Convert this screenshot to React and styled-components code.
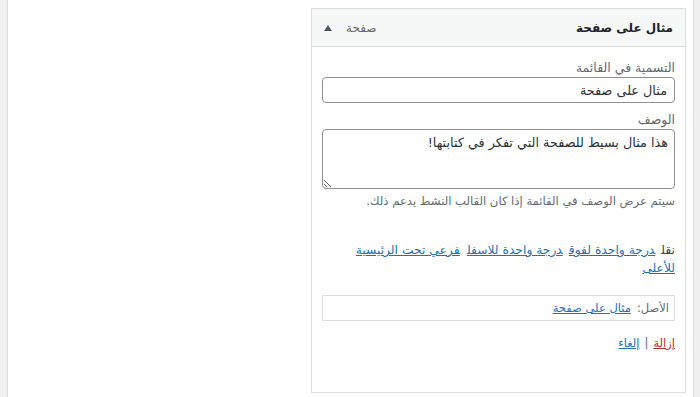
import React from 'react';
import styled, { createGlobalStyle } from 'styled-components';

const Global = createGlobalStyle`
  html, body { margin: 0; padding: 0; background: #f0f0f1; }
  body { font-family: "DejaVu Sans", sans-serif; font-size: 13px; color: #3c434a; }
  * { box-sizing: border-box; }
`;

const Page = styled.div`
  direction: rtl;
  margin-left: 7px;
  width: 687px;
  height: 397px;
  background: #fff;
  border-left: 1px solid #dcdcde;
  border-right: 1px solid #dcdcde;
  padding: 8px 7px 0 0;
  display: flex;
  align-items: flex-start;
`;

const Panel = styled.div`
  width: 375px;
  height: 385px;
  border: 1px solid #dcdcde;
  display: flex;
  flex-direction: column;
`;

const Header = styled.div`
  height: 38px;
  background: #f6f7f7;
  border-bottom: 1px solid #dcdcde;
  padding: 0 12px 0 12px;
  display: flex;
  align-items: center;
  justify-content: space-between;
`;

const Title = styled.span`
  font-size: 12px;
  font-weight: bold;
  color: #1d2327;
`;

const Controls = styled.span`
  display: flex;
  align-items: center;
  gap: 14px;
`;

const ItemType = styled.span`
  font-size: 12px;
  color: #646970;
`;

const Toggle = styled.span`
  width: 0;
  height: 0;
  border-left: 4px solid transparent;
  border-right: 4px solid transparent;
  border-bottom: 6px solid #50575e;
`;

const Settings = styled.div`
  padding: 12px 10px 10px 10px;
  display: flex;
  flex-direction: column;
`;

const Field = styled.label`
  display: flex;
  flex-direction: column;
  color: #646970;
  font-size: 12.5px;
  line-height: 18px;
  margin-bottom: ${p => p.$mb || 0}px;
`;

const TextInput = styled.input`
  direction: rtl;
  height: 26px;
  width: 100%;
  border: 1px solid #8c8f94;
  border-radius: 4px;
  padding: 0 7px;
  font-family: inherit;
  font-size: 12.8px;
  color: #2c3338;
  outline: none;
`;

const TextArea = styled.textarea`
  direction: rtl;
  height: 60px;
  width: 100%;
  border: 1px solid #8c8f94;
  border-radius: 4px;
  padding: 4px 6px;
  font-family: inherit;
  font-size: 12.8px;
  line-height: 18px;
  color: #2c3338;
  outline: none;
  resize: both;
  margin: 0;
  display: block;
`;

const Help = styled.span`
  margin-top: 3px;
  color: #646970;
  font-size: 11.6px;
  line-height: 18px;
`;

const Move = styled.div`
  margin-top: 31px;
  font-size: 12.3px;
  line-height: 18px;
  color: #3c434a;
`;

const LinkBtn = styled.a`
  color: ${p => (p.$danger ? '#b32d2e' : '#2271b1')};
  text-decoration: underline;
  cursor: pointer;
  margin-inline-start: ${p => p.$gap || 0}px;
`;

const Original = styled.p`
  margin: 18px 0 0 0;
  height: 26px;
  border: 1px solid #dcdcde;
  padding: 0 5px;
  display: flex;
  align-items: center;
  gap: 6px;
  color: #646970;
  font-size: 11.5px;
`;

const Actions = styled.div`
  margin-top: 13px;
  font-size: 11.5px;
  line-height: 18px;
  display: flex;
  align-items: center;
  gap: 5px;
`;

const Sep = styled.span`
  color: #646970;
`;

export default function App() {
  return (
    <>
      <Global />
      <Page>
        <Panel>
          <Header>
            <Title>مثال على صفحة</Title>
            <Controls>
              <ItemType>صفحة</ItemType>
              <Toggle />
            </Controls>
          </Header>
          <Settings>
            <Field $mb={8}>
              التسمية في القائمة
              <TextInput defaultValue="مثال على صفحة" />
            </Field>
            <Field>
              الوصف
              <TextArea defaultValue="هذا مثال بسيط للصفحة التي تفكر في كتابتها!" />
              <Help>سيتم عرض الوصف في القائمة إذا كان القالب النشط يدعم ذلك.</Help>
            </Field>
            <Move>
              نقل
              <LinkBtn $gap={6}>درجة واحدة لفوق</LinkBtn>
              <LinkBtn $gap={6}>درجة واحدة للاسفل</LinkBtn>
              <LinkBtn $gap={7}>فرعي تحت الرئيسية</LinkBtn>
              <br />
              <LinkBtn>للأعلى</LinkBtn>
            </Move>
            <Original>
              الأصل:
              <LinkBtn>مثال على صفحة</LinkBtn>
            </Original>
            <Actions>
              <LinkBtn $danger>إزالة</LinkBtn>
              <Sep>|</Sep>
              <LinkBtn>إلغاء</LinkBtn>
            </Actions>
          </Settings>
        </Panel>
      </Page>
    </>
  );
}
